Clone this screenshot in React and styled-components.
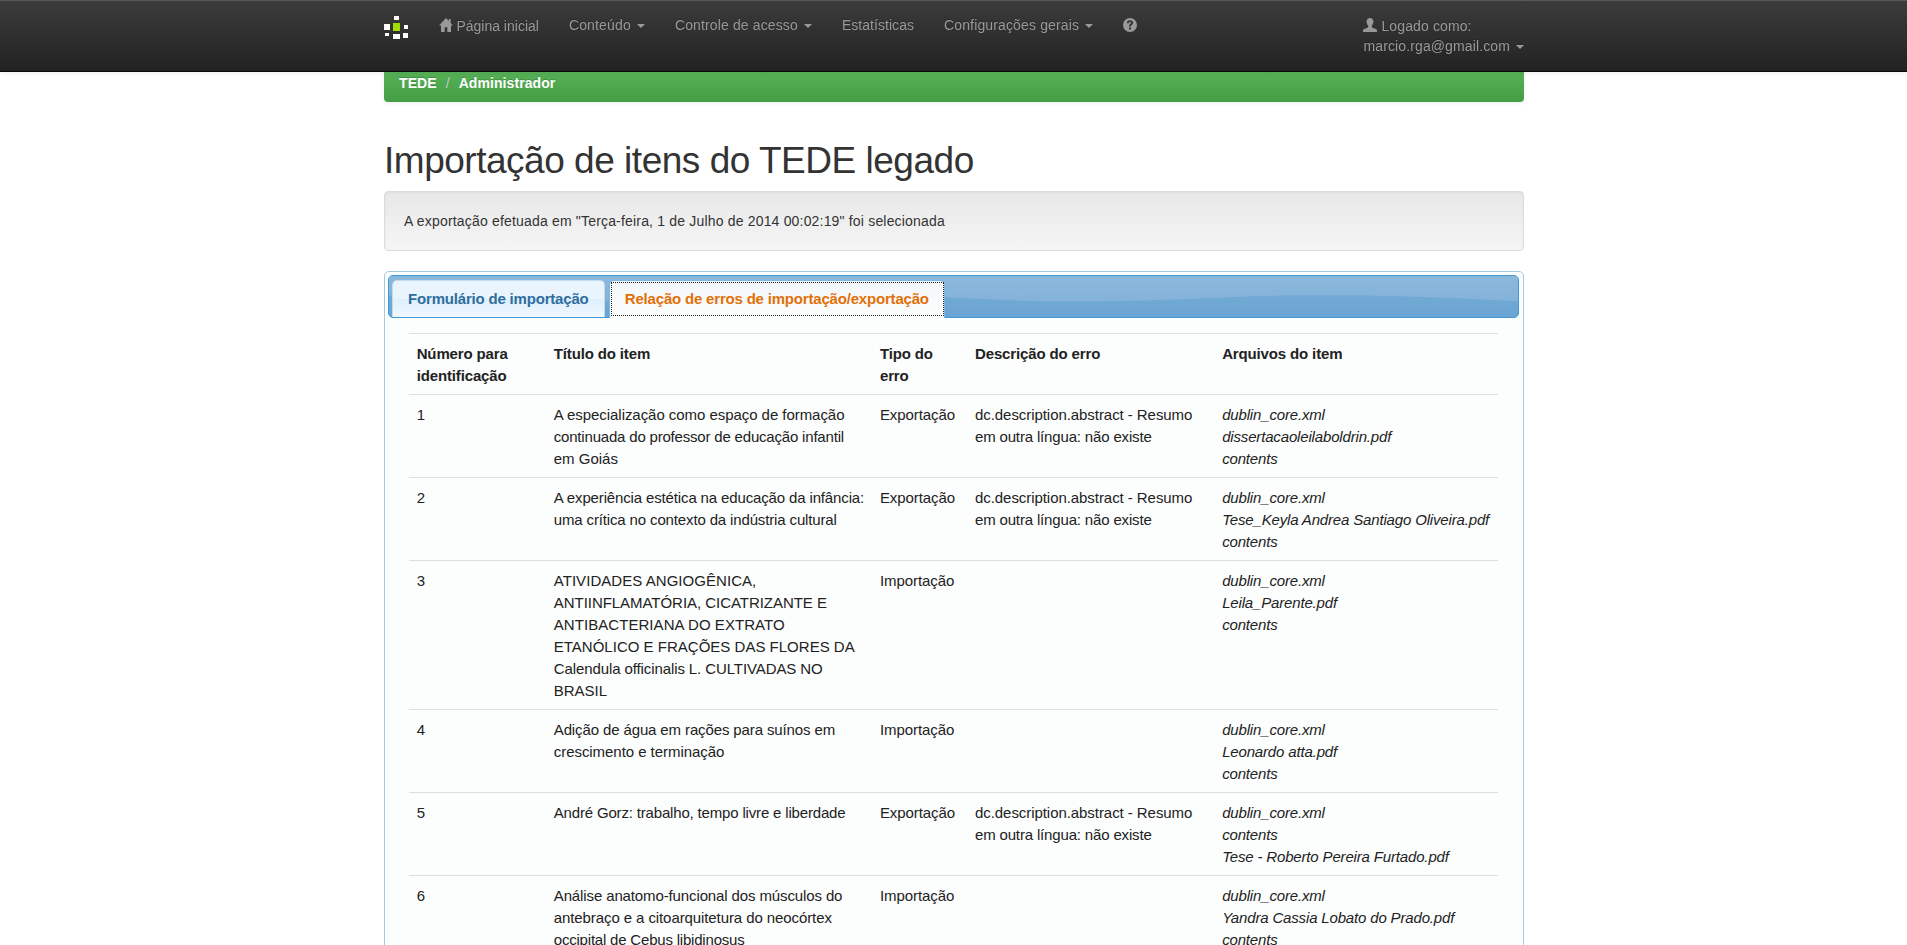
import React from "react";
import styled, { createGlobalStyle } from "styled-components";

const GlobalStyle = createGlobalStyle`
  *, *::before, *::after { box-sizing: border-box; }
  html { height: 100%; overflow: hidden; }
  body {
    margin: 0;
    height: 100%;
    overflow: hidden;
    background: #fff;
    color: #333;
    font: 14px/20px "Liberation Sans", Arial, sans-serif;
  }
`;

const Container = styled.div`
  width: 1140px;
  margin: 0 383px 0 384px;
`;

const Navbar = styled.header`
  position: fixed;
  z-index: 10;
  top: 0;
  left: 0;
  right: 0;
  height: 72px;
  border-bottom: 1px solid #080808;
  background: linear-gradient(#3c3c3c, #222);
  box-shadow: inset 0 1px 0 rgba(255, 255, 255, 0.15), 0 1px 5px rgba(0, 0, 0, 0.075);
`;

const NavInner = styled(Container)`
  display: flex;
  align-items: flex-start;
`;

const Logo = styled.svg`
  display: block;
  width: 25px;
  height: 25px;
  margin-top: 15px;
`;

const NavList = styled.nav`
  display: flex;
  margin-left: 14.500px;
`;

const NavItem = styled.a`
  display: block;
  padding: ${(p) => (p.$icon ? 16 : 15)}px 15px 15px;
  color: #999;
  letter-spacing: ${(p) => p.$spacing || 0}px;
  text-shadow: 0 -1px 0 rgba(0, 0, 0, 0.25);
  white-space: nowrap;
`;

const UserItem = styled(NavItem)`
  margin-left: auto;
  padding: 16px 0 0;
`;

const Glyph = styled.svg`
  display: inline-block;
  width: 14px;
  height: 14px;
  fill: currentColor;
  vertical-align: -1px;
`;

const Caret = styled.b`
  display: inline-block;
  margin-left: 2px;
  vertical-align: middle;
  border-top: 4px solid currentColor;
  border-left: 4px solid transparent;
  border-right: 4px solid transparent;
`;

const Page = styled(Container)`
  padding-top: 66px;
`;

const Breadcrumb = styled.div`
  height: 36px;
  padding: 7px 15px;
  border-radius: 4px;
  background: linear-gradient(#5cb85c -10%, #449d44);
  box-shadow: 0 1px 5px rgba(0, 0, 0, 0.075);
  color: #fff;
  font-weight: bold;
  letter-spacing: 0.08px;
  text-shadow: 0 -1px 0 rgba(0, 0, 0, 0.2);
`;

const Slash = styled.span`
  padding: 0 9px;
  color: #ccc;
  font-weight: normal;
`;

const Title = styled.h1`
  margin: 39.4px 0 9.6px;
  color: #333;
  font-size: 37px;
  font-weight: 500;
  letter-spacing: -0.48px;
  line-height: 39.6px;
`;

const Well = styled.div`
  height: 60px;
  margin-bottom: 20.4px;
  padding: 19px;
  border: 1px solid #dcdcdc;
  border-radius: 4px;
  background: linear-gradient(#e8e8e8, #f5f5f5);
  box-shadow: inset 0 1px 3px rgba(0, 0, 0, 0.05);
  letter-spacing: 0.18px;
`;

const Tabs = styled.section`
  padding: 3.08px 3.600px 3.08px 3.08px;
  border: 1px solid #a6c9e2;
  border-radius: 5px;
  background: #fcfdfd;
  color: #222;
  font-size: 15px;
  line-height: 22px;
`;

const TabBar = styled.div`
  position: relative;
  display: flex;
  height: 42.5px;
  padding: 4.08px 3.08px 0;
  border: 1px solid #4297d7;
  border-radius: 5px;
  background: #6ca6d4;
`;

const Wave = styled.svg`
  position: absolute;
  inset: 0;
  width: 100%;
  height: 100%;
  border-radius: 4px;
`;

const Tab = styled.a`
  position: relative;
  height: ${(p) => (p.$active ? "37.4px" : "36.4px")};
  margin-right: ${(p) => (p.$active ? 0 : "4px")};
  padding: 7.7px 15.4px 7.7px 14.9px;
  border: 1px solid ${(p) => (p.$active ? "#79b7e7" : "#c5dbec")};
  border-bottom: 0;
  border-radius: 5px 5px 0 0;
  background: ${(p) =>
    p.$active
      ? "linear-gradient(#f3f7f9, #fcfdfd)"
      : "linear-gradient(#eaf4fd 0 50%, #deeffc 50%, #f0f8fe)"};
  color: ${(p) => (p.$active ? "#e17009" : "#2e6e9e")};
  font-weight: bold;
  letter-spacing: -0.19px;
  line-height: 20px;
  white-space: nowrap;

  &::after {
    content: "";
    display: ${(p) => (p.$active ? "block" : "none")};
    position: absolute;
    inset: 1px 0 2px 1px;
    border: 1px dotted #222;
  }
`;

const Panel = styled.div`
  padding: 15.1px 21.1px 15.1px 20.6px;
`;

const Table = styled.table`
  width: 100%;
  border-collapse: collapse;
  table-layout: fixed;
`;

const Col = styled.col`
  width: ${(p) => p.$width}px;
`;

const HeadCell = styled.th`
  padding: 9px 8px 7px;
  border-top: 1px solid #ddd;
  text-align: left;
  vertical-align: top;
  letter-spacing: -0.14px;
`;

const Cell = styled.td`
  padding: 9px 8px 7px;
  border-top: 1px solid #ddd;
  vertical-align: top;
`;

const Line = styled.span`
  display: block;
  letter-spacing: ${(p) => p.$spacing}px;
  white-space: nowrap;
`;

const FileName = styled.em`
  display: block;
  letter-spacing: -0.16px;
  white-space: nowrap;
`;

const NO_ABSTRACT = [
  ["dc.description.abstract - Resumo", -0.06],
  ["em outra língua: não existe", -0.16],
];

const rows = [
  {
    title: [
      ["A especialização como espaço de formação", -0.05],
      ["continuada do professor de educação infantil", -0.19],
      ["em Goiás", 0],
    ],
    type: "Exportação",
    error: NO_ABSTRACT,
    files: ["dublin_core.xml", "dissertacaoleilaboldrin.pdf", "contents"],
  },
  {
    title: [
      ["A experiência estética na educação da infância:", -0.14],
      ["uma crítica no contexto da indústria cultural", -0.14],
    ],
    type: "Exportação",
    error: NO_ABSTRACT,
    files: ["dublin_core.xml", "Tese_Keyla Andrea Santiago Oliveira.pdf", "contents"],
  },
  {
    title: [
      ["ATIVIDADES ANGIOGÊNICA,", 0.05],
      ["ANTIINFLAMATÓRIA, CICATRIZANTE E", -0.04],
      ["ANTIBACTERIANA DO EXTRATO", 0.06],
      ["ETANÓLICO E FRAÇÕES DAS FLORES DA", 0.01],
      ["Calendula officinalis L. CULTIVADAS NO", -0.1],
      ["BRASIL", 0],
    ],
    type: "Importação",
    error: [],
    files: ["dublin_core.xml", "Leila_Parente.pdf", "contents"],
  },
  {
    title: [
      ["Adição de água em rações para suínos em", -0.12],
      ["crescimento e terminação", -0.05],
    ],
    type: "Importação",
    error: [],
    files: ["dublin_core.xml", "Leonardo atta.pdf", "contents"],
  },
  {
    title: [["André Gorz: trabalho, tempo livre e liberdade", -0.17]],
    type: "Exportação",
    error: NO_ABSTRACT,
    files: ["dublin_core.xml", "contents", "Tese - Roberto Pereira Furtado.pdf"],
  },
  {
    title: [
      ["Análise anatomo-funcional dos músculos do", -0.12],
      ["antebraço e a citoarquitetura do neocórtex", -0.09],
      ["occipital de Cebus libidinosus", -0.2],
    ],
    type: "Importação",
    error: [],
    files: ["dublin_core.xml", "Yandra Cassia Lobato do Prado.pdf", "contents"],
  },
];

const Lines = ({ items }) =>
  items.map(([text, spacing]) => (
    <Line key={text} $spacing={spacing}>
      {text}
    </Line>
  ));

const HomeIcon = () => (
  <Glyph viewBox="0 0 14 14">
    <path d="M7 0 0 7.400h2V14h3.700V9.200h2.600V14H12V7.400h2L11.700 5V1H9.800v2z" />
  </Glyph>
);

const UserIcon = () => (
  <Glyph viewBox="0 0 14 14">
    <path d="M7 0c2 0 3.400 1.300 3.400 3.500 0 1.800-.7 3.400-1.600 4.300v1c0 .5.3.8.8 1l3.200 1.300c.8.3 1.200.8 1.200 1.600V14H0v-1.300c0-.8.4-1.300 1.200-1.600l3.200-1.300c.5-.2.8-.5.8-1v-1C4.300 6.900 3.600 5.300 3.600 3.500 3.600 1.300 5 0 7 0z" />
  </Glyph>
);

const HelpIcon = () => (
  <Glyph viewBox="0 0 14 14">
    <path
      fillRule="evenodd"
      d="M7 0a7 7 0 1 1 0 14A7 7 0 0 1 7 0zM6 9.400v2h2v-2zM3.900 5.200h2c0-.8.4-1.200 1.100-1.200.6 0 1 .3 1 .8 0 .4-.2.7-.8 1.100C6.300 6.500 6 7 6 8.400h1.900c0-.8.2-1 .9-1.500.9-.6 1.300-1.300 1.300-2.200C10.100 3.200 8.900 2.300 7 2.300S3.900 3.300 3.900 5.200z"
    />
  </Glyph>
);

const GlossWave = () => (
  <Wave>
    <defs>
      <linearGradient id="upper" x1="0" y1="0" x2="0" y2="1">
        <stop offset="0" stopColor="#8cb8da" />
        <stop offset="1" stopColor="#84b2da" />
      </linearGradient>
      <linearGradient id="lower" x1="0" y1="0" x2="0" y2="1">
        <stop offset="0.45" stopColor="#71aad3" />
        <stop offset="1" stopColor="#6ba4d3" />
      </linearGradient>
    </defs>
    <rect width="100%" height="100%" fill="url(#lower)" />
    <g fill="url(#upper)">
      <path d="M-45 0H455V19.500C395 18.500 350 21 310 22.500C265 24.500 225 25.500 180 25.500C120 25.500 60 20.500 15 19.500L-45 19z" />
      <path d="M455 0H955V19.500C895 18.500 850 21 810 22.500C765 24.500 725 25.500 680 25.500C620 25.500 560 20.500 515 19.500L455 19.500z" />
      <path d="M955 0H1140V25.500C1090 23.500 1020 19.500 955 19.500z" />
    </g>
  </Wave>
);

export default function App() {
  return (
    <>
      <GlobalStyle />
      <Navbar>
        <NavInner>
          <Logo viewBox="0 0 25 25" shapeRendering="crispEdges" fill="#fff">
            <rect x="10" y="1" width="5" height="4" />
            <rect x="0" y="9" width="6" height="6" />
            <rect x="9" y="8" width="7" height="8" fill="#9fdc00" />
            <rect x="20" y="10" width="4" height="4" />
            <rect x="1" y="18" width="4" height="3" />
            <rect x="9" y="19" width="7" height="5" />
            <rect x="19" y="18" width="5" height="5" />
          </Logo>
          <NavList>
            <NavItem $icon><HomeIcon /> Página inicial</NavItem>
            <NavItem $spacing={0.16}>Conteúdo <Caret /></NavItem>
            <NavItem $spacing={0.13}>Controle de acesso <Caret /></NavItem>
            <NavItem $spacing={0.04}>Estatísticas</NavItem>
            <NavItem $spacing={0.14}>Configurações gerais <Caret /></NavItem>
            <NavItem $icon><HelpIcon /></NavItem>
          </NavList>
          <UserItem $spacing={0.12}>
            <UserIcon /> Logado como:
            <br />
            marcio.rga@gmail.com <Caret />
          </UserItem>
        </NavInner>
      </Navbar>
      <Page as="main">
        <Breadcrumb>
          TEDE<Slash>/</Slash>Administrador
        </Breadcrumb>
        <Title>Importação de itens do TEDE legado</Title>
        <Well>A exportação efetuada em "Terça-feira, 1 de Julho de 2014 00:02:19" foi selecionada</Well>
        <Tabs>
          <TabBar>
            <GlossWave />
            <Tab>Formulário de importação</Tab>
            <Tab $active>Relação de erros de importação/exportação</Tab>
          </TabBar>
          <Panel>
            <Table>
              <colgroup>
                <Col $width={137} />
                <Col $width={326} />
                <Col $width={95} />
                <Col $width={247} />
                <Col $width={284} />
              </colgroup>
              <thead>
                <tr>
                  <HeadCell>Número para identificação</HeadCell>
                  <HeadCell>Título do item</HeadCell>
                  <HeadCell>Tipo do erro</HeadCell>
                  <HeadCell>Descrição do erro</HeadCell>
                  <HeadCell>Arquivos do item</HeadCell>
                </tr>
              </thead>
              <tbody>
                {rows.map((row, i) => (
                  <tr key={i}>
                    <Cell>{i + 1}</Cell>
                    <Cell><Lines items={row.title} /></Cell>
                    <Cell><Line $spacing={-0.08}>{row.type}</Line></Cell>
                    <Cell><Lines items={row.error} /></Cell>
                    <Cell>
                      {row.files.map((f) => (
                        <FileName key={f}>{f}</FileName>
                      ))}
                    </Cell>
                  </tr>
                ))}
              </tbody>
            </Table>
          </Panel>
        </Tabs>
      </Page>
    </>
  );
}
